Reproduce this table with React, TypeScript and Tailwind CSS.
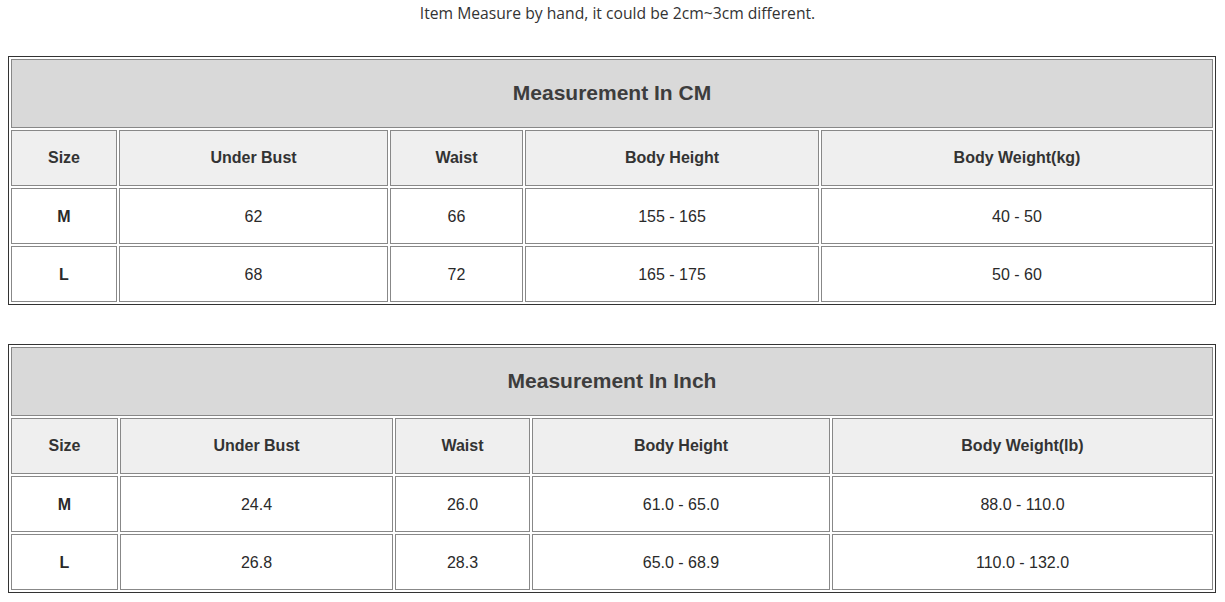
import React from 'react';

type Table = {
    title: string;
    cols: string;
    headers: string[];
    rows: string[][];
};

const tables: Table[] = [
    {
        title: 'Measurement In CM',
        cols: 'grid-cols-[106px_269px_133px_294px_1fr]',
        headers: ['Size', 'Under Bust', 'Waist', 'Body Height', 'Body Weight(kg)'],
        rows: [
            ['M', '62', '66', '155 - 165', '40 - 50'],
            ['L', '68', '72', '165 - 175', '50 - 60'],
        ],
    },
    {
        title: 'Measurement In Inch',
        cols: 'grid-cols-[107px_273px_135px_298px_1fr]',
        headers: ['Size', 'Under Bust', 'Waist', 'Body Height', 'Body Weight(lb)'],
        rows: [
            ['M', '24.4', '26.0', '61.0 - 65.0', '88.0 - 110.0'],
            ['L', '26.8', '28.3', '65.0 - 68.9', '110.0 - 132.0'],
        ],
    },
];

const SizeTable = ({ table }: { table: Table }) => {
    return (
        <div
            className={`grid ${table.cols} gap-[2px] p-[2px] border border-[#333] bg-white`}
            style={{ fontFamily: '"Liberation Sans", Arial, sans-serif' }}
        >
            <div className="col-span-5 h-[69px] pb-[2px] flex items-center justify-center bg-[#d9d9d9] border border-[#888] text-[21px] font-bold text-[#3d3d3d]">
                {table.title}
            </div>
            {table.headers.map((h) => (
                <div
                    key={h}
                    className="h-[56px] flex items-center justify-center bg-[#efefef] border border-[#888] text-[16px] font-bold text-[#333]"
                >
                    {h}
                </div>
            ))}
            {table.rows.map((row) =>
                row.map((cell, i) => (
                    <div
                        key={row[0] + i}
                        className={`h-[56px] pt-[1px] flex items-center justify-center bg-white border border-[#888] text-[16px] text-[#2a2a2a] ${
                            i === 0 ? 'font-bold' : ''
                        }`}
                    >
                        {cell}
                    </div>
                ))
            )}
        </div>
    );
};

const App = () => {
    return (
        <div className="w-[1225px] h-[602px] bg-white overflow-hidden">
            <p
                className="pl-[10px] text-center text-[15.7px] leading-[27px] text-[#333]"
                style={{ fontFamily: '"Open Sans", sans-serif' }}
            >
                Item Measure by hand, it could be 2cm~3cm different.
            </p>
            <div className="mt-[29px] ml-[8px] w-[1208px] flex flex-col gap-[39px]">
                {tables.map((t) => (
                    <SizeTable key={t.title} table={t} />
                ))}
            </div>
        </div>
    );
};

export default App;
